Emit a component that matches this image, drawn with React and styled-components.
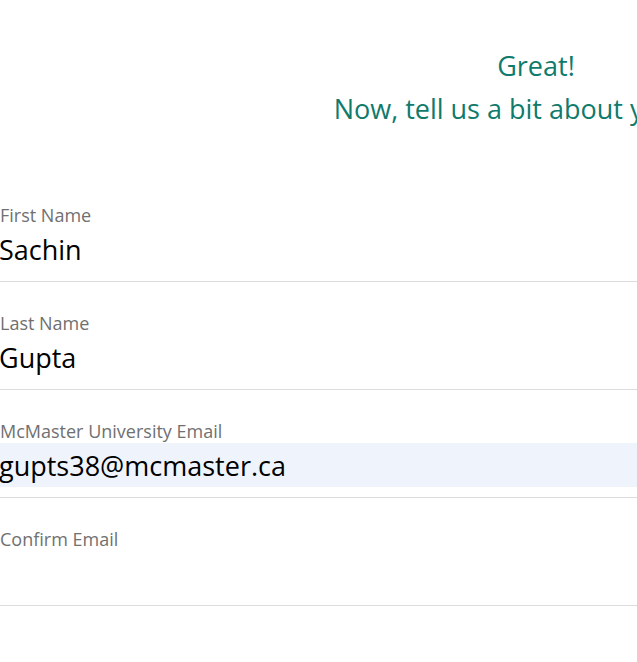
import styled, { createGlobalStyle } from "styled-components";

const GlobalStyle = createGlobalStyle`
    html, body {
        margin: 0;
        padding: 0;
        background: #ffffff;
        overflow: hidden;
    }
    body {
        font-family: "Open Sans", "Noto Sans", sans-serif;
    }
`;

const Page = styled.div`
    width: 1072px;
    display: flex;
    flex-flow: column nowrap;
`;

const Header = styled.div`
    display: flex;
    flex-flow: column nowrap;
    align-items: center;
    padding-top: 44px;
    margin-bottom: 74px;
    color: #107a6c;
    font-size: 27px;
    line-height: 43px;
`;

const HeaderLine = styled.div`
    white-space: nowrap;
`;

const Form = styled.form`
    display: flex;
    flex-flow: column nowrap;
    gap: 30px;
`;

const Field = styled.div`
    display: flex;
    flex-flow: column nowrap;
    padding-bottom: 10px;
    border-bottom: 1px solid #dcdcdc;
`;

const Label = styled.label`
    font-size: 18px;
    line-height: 22px;
    color: #707070;
    margin-bottom: 1px;
    white-space: nowrap;
`;

const TextInput = styled.input`
    height: 44px;
    box-sizing: border-box;
    border: none;
    outline: none;
    padding: 0;
    margin: 0 0 0 -1px;
    font-family: "Open Sans", "Noto Sans", sans-serif;
    font-size: 27px;
    color: #000000;
    background: ${p => (p.$filled ? "#eff4fc" : "transparent")};
`;

const fields = [
    { id: "first", label: "First Name", value: "Sachin" },
    { id: "last", label: "Last Name", value: "Gupta" },
    { id: "email", label: "McMaster University Email", value: "gupts38@mcmaster.ca", filled: true },
    { id: "confirm", label: "Confirm Email", value: "" }
];

function App() {
    return (
        <Page>
            <GlobalStyle />
            <Header>
                <HeaderLine>Great!</HeaderLine>
                <HeaderLine>Now, tell us a bit about yourself.</HeaderLine>
            </Header>
            <Form onSubmit={e => e.preventDefault()}>
                {fields.map(f => (
                    <Field key={f.id}>
                        <Label htmlFor={f.id}>{f.label}</Label>
                        <TextInput id={f.id} defaultValue={f.value} $filled={f.filled} />
                    </Field>
                ))}
            </Form>
        </Page>
    );
}

export default App;
